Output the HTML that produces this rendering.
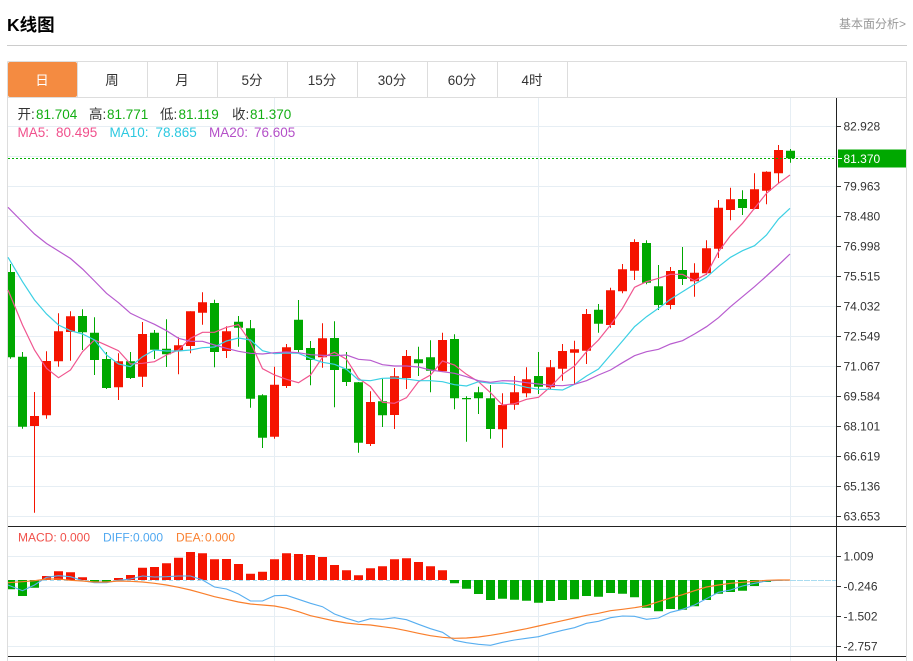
<!DOCTYPE html>
<html lang="zh">
<head>
<meta charset="utf-8">
<title>K线图</title>
<style>
html,body{margin:0;padding:0;background:#fff;width:913px;height:661px;overflow:hidden}
svg{display:block;position:absolute;left:0;top:0}
text{font-family:"Liberation Sans","Noto Sans CJK SC",sans-serif}
</style>
</head>
<body>
<svg width="913" height="661" viewBox="0 0 913 661" xmlns="http://www.w3.org/2000/svg">
<!-- header -->
<text x="7" y="31" font-size="17.5" font-weight="700" fill="#000">K线图</text>
<text x="839" y="28" font-size="12" fill="#999">基本面分析&gt;</text>
<path d="M7 45.5H907" stroke="#ccc" fill="none"/>
<!-- tabs -->
<path d="M7.5 61.5H906.5M7.5 97.5H906.5M7.5 61.5V661M906.5 61.5V661M77.5 62V97M147.5 62V97M217.5 62V97M287.5 62V97M357.5 62V97M427.5 62V97M497.5 62V97M567.5 62V97" stroke="#ddd" fill="none"/>
<rect x="8" y="62" width="69" height="35" rx="2" fill="#f48b41"/>
<g font-size="13.5" fill="#333" text-anchor="middle">
<text x="42" y="85" fill="#fff">日</text>
<text x="112" y="85">周</text>
<text x="182" y="85">月</text>
<text x="252" y="85">5分</text>
<text x="322" y="85">15分</text>
<text x="392" y="85">30分</text>
<text x="462" y="85">60分</text>
<text x="532" y="85">4时</text>
</g>
<!-- grid -->
<path d="M8 126.5H836M8 156.5H836M8 186.5H836M8 216.5H836M8 246.5H836M8 276.5H836M8 306.5H836M8 336.5H836M8 366.5H836M8 396.5H836M8 426.5H836M8 456.5H836M8 486.5H836M8 516.5H836M8 556.5H836M8 586.5H836M8 616.5H836M8 646.5H836M274.5 98V661M538.5 98V661M790.5 98V661" stroke="#e6eef4" fill="none"/>
<!-- wicks -->
<path fill="none" stroke="#f51400" d="M34.5 392V512.7M46.5 351.3V418.7M58.5 313.3V366.7M70.5 311.3V360.7M118.5 353.3V400M142.5 322V387M178.5 337.3V374.3M190.5 311.3V353.3M202.5 292.3V324.7M226.5 326.3V358M274.5 366.7V438.7M286.5 344V388M322.5 323.3V367.7M370.5 391.3V446M394.5 368V429M406.5 350V389M442.5 332.7V371.3M502.5 393.3V447.7M514.5 376V409.7M526.5 367.3V397.3M550.5 360V389.3M562.5 344V380.7M574.5 340.7V384M586.5 309V364M610.5 287.7V327.7M622.5 264V293.3M634.5 239.3V280M670.5 267V309.3M694.5 263.3V296.7M706.5 240.3V275M718.5 200V258M730.5 187.7V220.3M754.5 173.3V209.3M766.5 171.3V204.3M778.5 145V183.3"/>
<path fill="none" stroke="#00a800" d="M10.5 264V358.7M22.5 352V428.7M82.5 309.3V350M94.5 317.3V375M106.5 352V389M130.5 352V379M154.5 330V359M166.5 319.3V367M214.5 299.7V367.3M238.5 316V346.7M250.5 320V407.7M262.5 394.3V448M298.5 300V352.7M310.5 341V385.3M334.5 321.3V407.3M346.5 352V386M358.5 382V452.7M382.5 378.7V427M418.5 346.7V376M430.5 340.3V392.3M454.5 334.3V409.3M466.5 396.3V441.7M478.5 386.7V414M490.5 385V438.7M538.5 352V394M598.5 304V332.7M646.5 240.3V284.3M658.5 265V310M682.5 247V285M742.5 190.3V215M790.5 149V162.7"/>
<!-- bodies -->
<path fill="#f51400" d="M30 416h9V426h-9zM42 361h9V415.3h-9zM54 331.3h9V361.3h-9zM66 316.3h9V332h-9zM114 361.3h9V387.3h-9zM138 334h9V376.7h-9zM174 345.3h9V350.7h-9zM186 311.3h9V346h-9zM198 302.3h9V312.7h-9zM222 331.3h9V351h-9zM270 384.7h9V436.7h-9zM282 347.3h9V386h-9zM318 338.3h9V357.3h-9zM366 402h9V444h-9zM390 376.3h9V415h-9zM402 356h9V378h-9zM438 340h9V371.3h-9zM498 405h9V429.3h-9zM510 392.3h9V404.7h-9zM522 379.3h9V393.3h-9zM546 367.3h9V387.3h-9zM558 351h9V368.7h-9zM570 349.3h9V352.7h-9zM582 314h9V350.7h-9zM606 290.3h9V325h-9zM618 269.3h9V291.3h-9zM630 242h9V270.7h-9zM666 271h9V305h-9zM690 272.7h9V281.3h-9zM702 248.3h9V273.3h-9zM714 207.7h9V248.7h-9zM726 199.3h9V210h-9zM750 189.3h9V209h-9zM762 171.7h9V190.7h-9zM774 150h9V173.3h-9z"/>
<path fill="#00a800" d="M8 272h7V357.3h-7zM18 356.7h9V426.7h-9zM78 316h9V332.3h-9zM90 332.7h9V360h-9zM102 359h9V388h-9zM126 361.3h9V378h-9zM150 332.7h9V349.7h-9zM162 348.7h9V354.3h-9zM210 303h9V352h-9zM234 321.7h9V327.7h-9zM246 328.3h9V398.7h-9zM258 395.3h9V437.7h-9zM294 319.7h9V350h-9zM306 348h9V360h-9zM330 338h9V370h-9zM342 368.7h9V382h-9zM354 382.3h9V442.7h-9zM378 401.3h9V415.3h-9zM414 359.3h9V363.3h-9zM426 357.3h9V370.7h-9zM450 339h9V398.3h-9zM462 398h9V399.3h-9zM474 392.3h9V398.3h-9zM486 398.3h9V429h-9zM534 376h9V386.7h-9zM594 309.7h9V323.7h-9zM642 243h9V282.7h-9zM654 286.3h9V305h-9zM678 270h9V279h-9zM738 199h9V208h-9zM786 150.7h9V158.3h-9z"/>
<!-- MA lines -->
<polyline fill="none" stroke="#f0558f" stroke-width="1.2" points="8,290 22.5,325 34.5,350 46.5,368.3 58.5,377.7 70.5,370 82.5,351.7 94.5,340 106.5,345.3 118.5,350.7 130.5,364 142.5,363.3 154.5,361.7 166.5,355 178.5,350 190.5,338.3 202.5,332.3 214.5,332.3 226.5,327.3 238.5,324.7 250.5,342.3 262.5,368.7 274.5,375 286.5,379.3 298.5,382.7 310.5,375 322.5,357.3 334.5,352.3 346.5,359.3 358.5,378.3 370.5,386.7 382.5,402.3 394.5,403.3 406.5,397.7 418.5,381.7 430.5,375 442.5,361 454.5,365 466.5,374.3 478.5,381.7 490.5,392.7 502.5,405 514.5,403.7 526.5,399.3 538.5,397.3 550.5,386.7 562.5,374.3 574.5,366 586.5,351.7 598.5,340 610.5,325 622.5,308.3 634.5,287.3 646.5,281.7 658.5,278.3 670.5,274.3 682.5,274.3 694.5,280.7 706.5,274 718.5,251.7 730.5,235.7 742.5,223.3 754.5,208.3 766.5,193.3 778.5,183.3 790,175"/>
<polyline fill="none" stroke="#3cd0e4" stroke-width="1.2" points="8,257.3 22.5,281.7 34.5,300 46.5,314 58.5,325 70.5,330.7 82.5,334 94.5,340 106.5,355 118.5,364 130.5,366.7 142.5,356.7 154.5,350 166.5,351 178.5,351 190.5,350 202.5,347.7 214.5,347 226.5,341 238.5,338 250.5,340 262.5,350.7 274.5,353.7 286.5,353 298.5,353.3 310.5,358.3 322.5,362.3 334.5,364.3 346.5,369.3 358.5,380 370.5,380.7 382.5,378.3 394.5,378 406.5,379 418.5,380.7 430.5,380.7 442.5,381.7 454.5,384.7 466.5,386 478.5,381.7 490.5,383.3 502.5,383 514.5,384.3 526.5,387.3 538.5,389.3 550.5,389.3 562.5,390 574.5,384.3 586.5,376 598.5,369 610.5,355 622.5,341 634.5,326.7 646.5,316.7 658.5,308.3 670.5,299.3 682.5,291.7 694.5,284.3 706.5,277.3 718.5,266.7 730.5,257.3 742.5,250.7 754.5,245.7 766.5,235 778.5,219 790,208.3"/>
<polyline fill="none" stroke="#b85ccf" stroke-width="1.2" points="8,207.3 22.5,222 34.5,234 46.5,243.5 58.5,251 70.5,258.5 82.5,269 94.5,281 106.5,293.3 118.5,302.7 130.5,313.3 142.5,319 154.5,324.3 166.5,330.7 178.5,338.3 190.5,341.3 202.5,341.3 214.5,345 226.5,348.3 238.5,351.3 250.5,353.3 262.5,354 274.5,352.7 286.5,352 298.5,352.7 310.5,354.7 322.5,355.3 334.5,355.7 346.5,355 358.5,359.3 370.5,360.3 382.5,364.7 394.5,366 406.5,366 418.5,367 430.5,370 442.5,371.7 454.5,373.3 466.5,376.7 478.5,380.7 490.5,382.3 502.5,380.7 514.5,381 526.5,382.7 538.5,384 550.5,385.3 562.5,385.7 574.5,384.3 586.5,380.7 598.5,375 610.5,370 622.5,362.7 634.5,355.7 646.5,351.7 658.5,349.3 670.5,344 682.5,340.7 694.5,334 706.5,326.7 718.5,317.7 730.5,306.7 742.5,296.7 754.5,286.7 766.5,276 778.5,265 790,254"/>
<!-- last price line -->
<path d="M8 158.5H836" stroke="#00b000" stroke-dasharray="2 2" fill="none"/>
<!-- MACD -->
<path d="M8 580.5H836" stroke="#a9dcf0" stroke-dasharray="4 3" fill="none"/>
<path fill="#f51400" d="M42 576h9V580h-9zM54 571.3h9V580h-9zM66 572.3h9V580h-9zM78 577.3h9V580h-9zM114 578h9V580h-9zM126 575h9V580h-9zM138 567.7h9V580h-9zM150 567h9V580h-9zM162 563.3h9V580h-9zM174 557.7h9V580h-9zM186 552h9V580h-9zM198 553.3h9V580h-9zM210 559.3h9V580h-9zM222 559h9V580h-9zM234 564h9V580h-9zM246 573.7h9V580h-9zM258 571.7h9V580h-9zM270 559.3h9V580h-9zM282 553.3h9V580h-9zM294 554h9V580h-9zM306 555h9V580h-9zM318 557h9V580h-9zM330 565h9V580h-9zM342 570.3h9V580h-9zM354 575.3h9V580h-9zM366 568.3h9V580h-9zM378 566.3h9V580h-9zM390 559.3h9V580h-9zM402 558.3h9V580h-9zM414 562h9V580h-9zM426 566.3h9V580h-9zM438 570.3h9V580h-9z"/>
<path fill="#00a800" d="M8 580h7V589.3h-7zM18 580h9V596h-9zM30 580h9V587.7h-9zM90 580h9V582.3h-9zM102 580h9V582.3h-9zM450 580h9V583.3h-9zM462 580h9V588.7h-9zM474 580h9V594h-9zM486 580h9V600h-9zM498 580h9V598.7h-9zM510 580h9V599.7h-9zM522 580h9V600.7h-9zM534 580h9V602.7h-9zM546 580h9V601h-9zM558 580h9V600h-9zM570 580h9V599.3h-9zM582 580h9V596h-9zM594 580h9V596.7h-9zM606 580h9V593h-9zM618 580h9V593.7h-9zM630 580h9V597.3h-9zM642 580h9V607.7h-9zM654 580h9V611.3h-9zM666 580h9V609h-9zM678 580h9V609.7h-9zM690 580h9V606.3h-9zM702 580h9V600h-9zM714 580h9V593.7h-9zM726 580h9V592h-9zM738 580h9V590.7h-9zM750 580h9V586h-9zM762 580h9V582h-9zM774 580h9V580.6h-9z"/>
<polyline fill="none" stroke="#57aef0" stroke-width="1.1" points="8,585 22.5,590.7 34.5,585 46.5,577.3 58.5,575.7 70.5,576.7 82.5,580.7 94.5,582.7 106.5,582.7 118.5,580.3 130.5,579 142.5,576 154.5,577 166.5,576.7 178.5,576 190.5,576 202.5,580 214.5,587 226.5,589 238.5,594 250.5,601 262.5,601 274.5,595.7 286.5,595.3 298.5,599.3 310.5,603.3 322.5,606.7 334.5,614 346.5,618.3 358.5,622 370.5,618.7 382.5,619.3 394.5,617.7 406.5,619.7 418.5,624.3 430.5,628.7 442.5,632.3 454.5,640.3 466.5,642.7 478.5,644.3 490.5,645.3 502.5,642.3 514.5,640 526.5,638.3 538.5,636.7 550.5,633.3 562.5,630.3 574.5,627.7 586.5,623.3 598.5,621.3 610.5,617.7 622.5,616 634.5,616.3 646.5,619.3 658.5,618 670.5,612.3 682.5,609.3 694.5,605 706.5,598.7 718.5,592.3 730.5,590 742.5,586 754.5,583.3 766.5,581 778.5,580.3 790,580"/>
<polyline fill="none" stroke="#f97f2c" stroke-width="1.2" points="8,582.7 22.5,581.7 34.5,580.7 46.5,579 58.5,579 70.5,580.3 82.5,581 94.5,582 106.5,582 118.5,581 130.5,581.3 142.5,582 154.5,583.3 166.5,585 178.5,587.3 190.5,590 202.5,593.3 214.5,596.7 226.5,599.3 238.5,602 250.5,604 262.5,605 274.5,606 286.5,608.3 298.5,611.7 310.5,615.7 322.5,618.3 334.5,621 346.5,623 358.5,624.3 370.5,625 382.5,626.7 394.5,628.3 406.5,630.7 418.5,633.3 430.5,635.7 442.5,637.3 454.5,638.3 466.5,638 478.5,637 490.5,635.3 502.5,633.3 514.5,631 526.5,628.7 538.5,626 550.5,623.3 562.5,620.7 574.5,618 586.5,615.3 598.5,613.3 610.5,610.7 622.5,609.3 634.5,607.7 646.5,605.7 658.5,601.7 670.5,598 682.5,594.7 694.5,590.7 706.5,587 718.5,585 730.5,583.3 742.5,582.3 754.5,581.3 766.5,580.3 778.5,580 790,580"/>
<path d="M790 580.5H836" stroke="#a9dcf0" stroke-dasharray="4 3" fill="none"/>
<!-- frame lines -->
<path d="M8 526.5H906M8 656.5H906M836.5 98V661" stroke="#222" fill="none"/>
<path d="M837 126.5h4M837 186.5h4M837 216.5h4M837 246.5h4M837 276.5h4M837 306.5h4M837 336.5h4M837 366.5h4M837 396.5h4M837 426.5h4M837 456.5h4M837 486.5h4M837 516.5h4M837 556.5h4M837 586.5h4M837 616.5h4M837 646.5h4" stroke="#333" fill="none"/>
<!-- axis labels -->
<g font-size="12" fill="#333">
<text x="843.5" y="130.5">82.928</text>
<text x="843.5" y="190.5">79.963</text>
<text x="843.5" y="220.5">78.480</text>
<text x="843.5" y="250.5">76.998</text>
<text x="843.5" y="280.5">75.515</text>
<text x="843.5" y="310.5">74.032</text>
<text x="843.5" y="340.5">72.549</text>
<text x="843.5" y="370.5">71.067</text>
<text x="843.5" y="400.5">69.584</text>
<text x="843.5" y="430.5">68.101</text>
<text x="843.5" y="460.5">66.619</text>
<text x="843.5" y="490.5">65.136</text>
<text x="843.5" y="520.5">63.653</text>
<text x="843.5" y="560.5">1.009</text>
<text x="843.5" y="590.5">-0.246</text>
<text x="843.5" y="620.5">-1.502</text>
<text x="843.5" y="650.5">-2.757</text>
</g>
<rect x="838" y="149.5" width="68" height="18" fill="#00a800"/>
<path d="M838 158.5h4" stroke="#fff"/>
<text x="843.5" y="163" font-size="12" fill="#fff">81.370</text>
<!-- legend -->
<g font-size="13.5">
<text x="17.5" y="119" fill="#333">开:</text><text x="36" y="119" fill="#13ae13">81.704</text>
<text x="89" y="119" fill="#333">高:</text><text x="107" y="119" fill="#13ae13">81.771</text>
<text x="160" y="119" fill="#333">低:</text><text x="178.5" y="119" fill="#13ae13">81.119</text>
<text x="232" y="119" fill="#333">收:</text><text x="250" y="119" fill="#13ae13">81.370</text>
<text x="17.5" y="137" fill="#f0508c">MA5:</text><text x="56" y="137" fill="#f0508c">80.495</text>
<text x="109.5" y="137" fill="#2cc8e0">MA10:</text><text x="155.5" y="137" fill="#2cc8e0">78.865</text>
<text x="209" y="137" fill="#b450c8">MA20:</text><text x="254" y="137" fill="#b450c8">76.605</text>
</g>
<g font-size="12">
<text x="18" y="541.5" fill="#f0504a">MACD:</text><text x="60" y="541.5" fill="#f0504a">0.000</text>
<text x="103" y="541.5" fill="#50a8f0">DIFF:</text><text x="133" y="541.5" fill="#50a8f0">0.000</text>
<text x="176" y="541.5" fill="#f98030">DEA:</text><text x="205" y="541.5" fill="#f98030">0.000</text>
</g>
</svg>
</body>
</html>
